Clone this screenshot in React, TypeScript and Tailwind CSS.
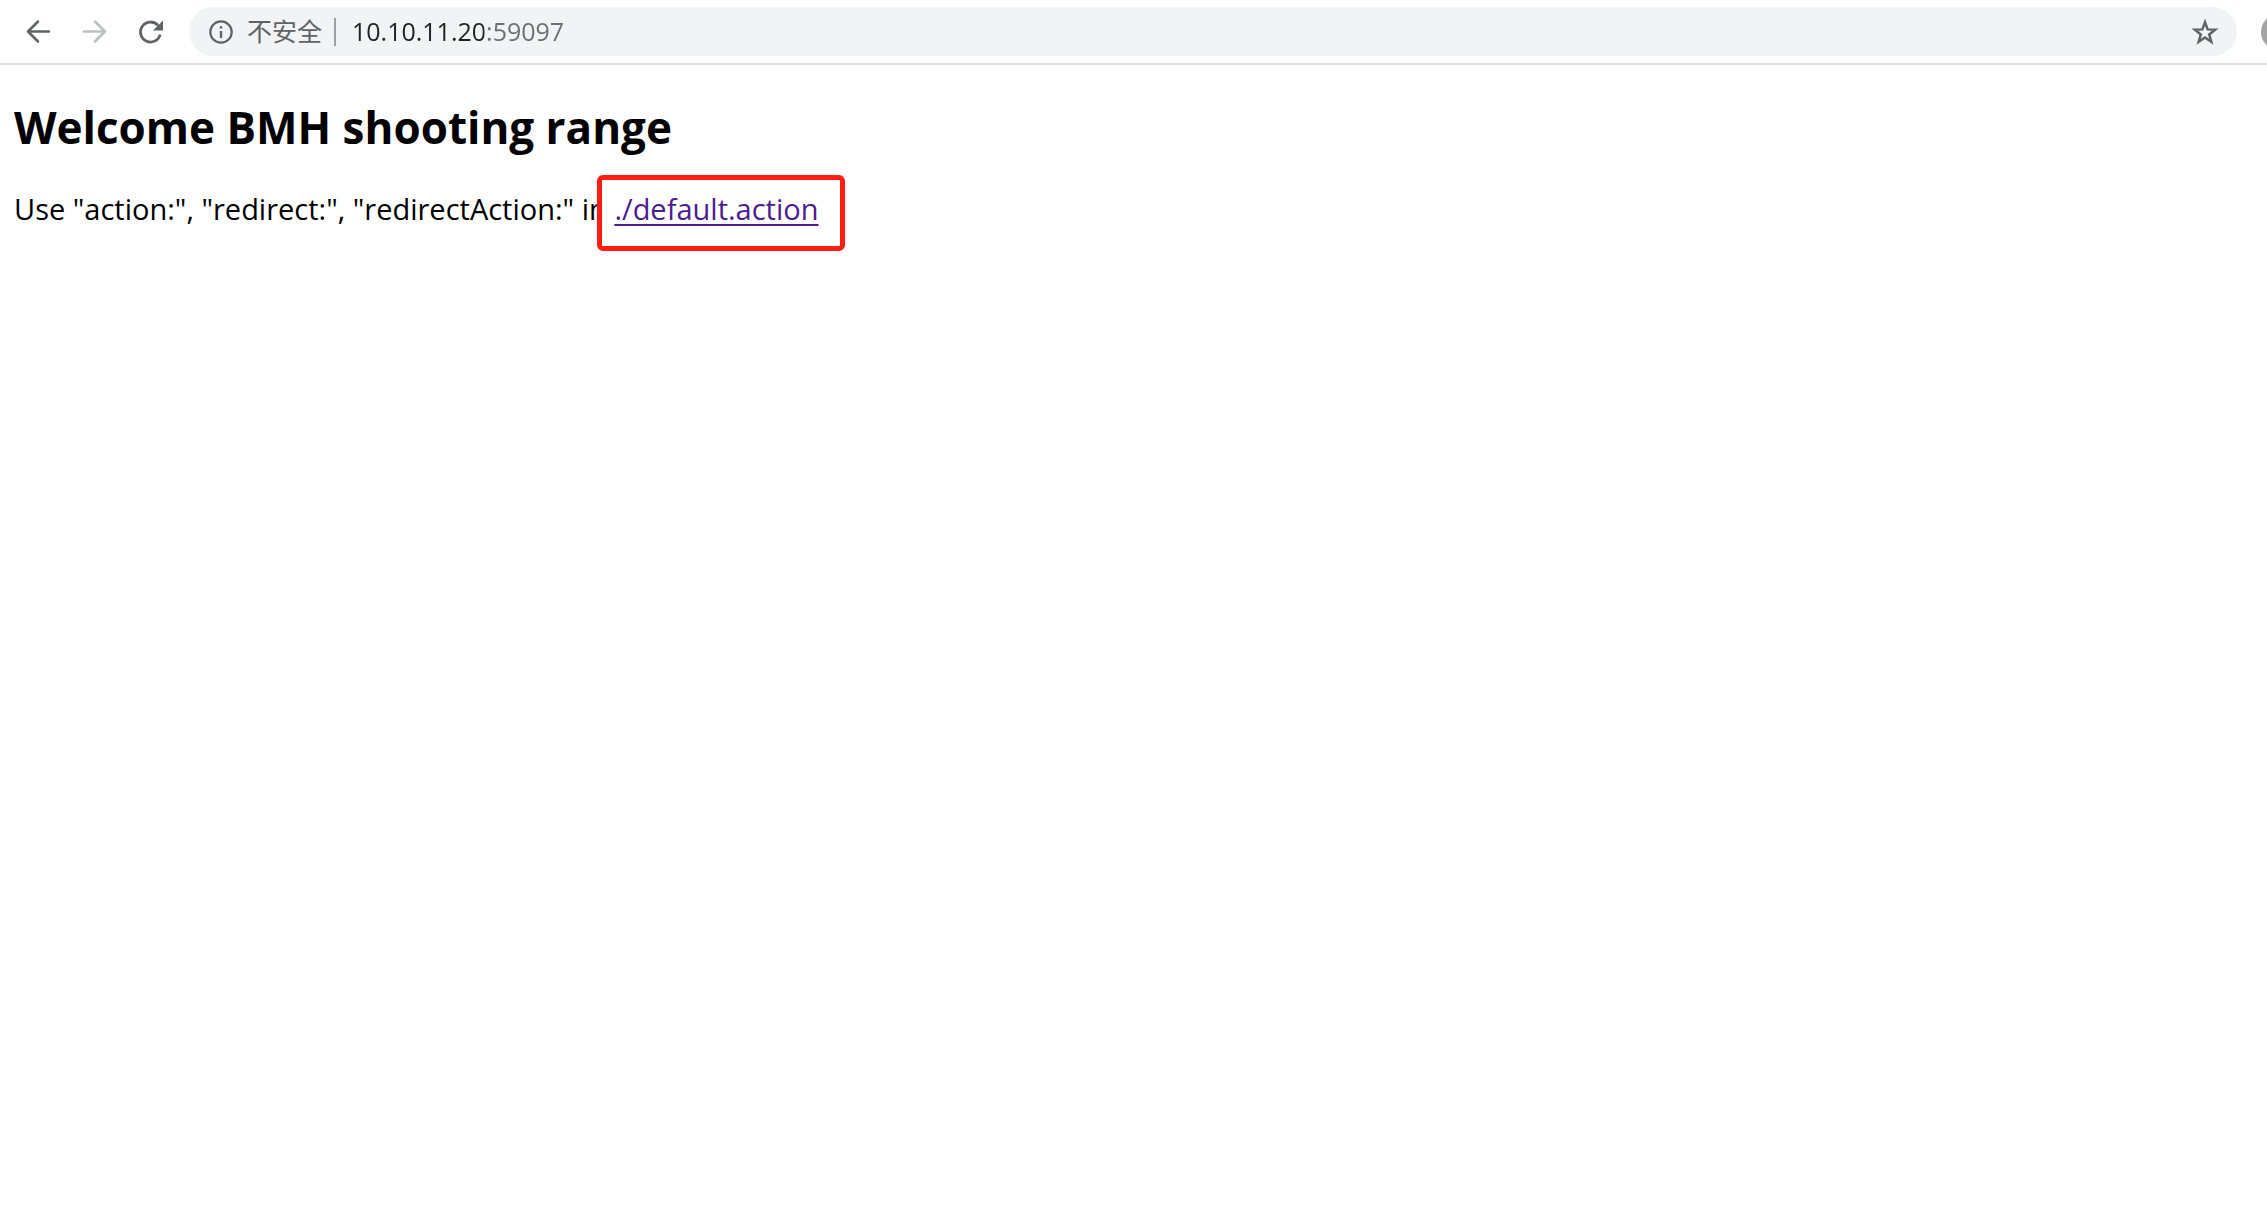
import { useState, type ReactNode } from "react";

function NavButton({ label, children, disabled }: { label: string; children: ReactNode; disabled?: boolean }) {
  return (
    <button
      type="button"
      aria-label={label}
      disabled={disabled}
      className="grid size-9 place-items-center text-[#5f6368] disabled:text-[#bdbfc1]"
    >
      {children}
    </button>
  );
}

function Arrow({ flipped }: { flipped?: boolean }) {
  return (
    <svg viewBox="0 0 36 36" className="size-9" fill="none" stroke="currentColor" strokeWidth="2.5" strokeLinecap="round" strokeLinejoin="round">
      {flipped ? <path d="M8 17.5h21M19 7.5l10 10-10 10" /> : <path d="M29 17.5H8M18 7.5l-10 10 10 10" />}
    </svg>
  );
}

function Toolbar() {
  const [address, setAddress] = useState("10.10.11.20:59097");
  return (
    <header className="flex items-center overflow-hidden border-b-2 border-[#dadce0] pt-[7px] pb-[7px] pl-5">
      <nav aria-label="Navigation" className="flex shrink-0 gap-5">
        <NavButton label="Back">
          <Arrow />
        </NavButton>
        <NavButton label="Forward" disabled>
          <Arrow flipped />
        </NavButton>
        <NavButton label="Reload">
          <svg viewBox="0 0 36 36" className="size-9" fill="none">
            <path d="M28.2 20.5A10 10 0 1 1 26 11.4" stroke="currentColor" strokeWidth="2.8" />
            <path d="M31 6.5v10H21z" fill="currentColor" />
          </svg>
        </NavButton>
      </nav>
      <div className="ml-[21px] flex h-[49px] min-w-0 flex-1 items-center rounded-full bg-[#f1f3f4] pr-4 pl-5 text-[25px] leading-[36px]">
        <button type="button" className="flex shrink-0 items-center gap-[14px] text-[#5f6368]">
          <svg viewBox="0 0 24 24" className="size-6" fill="none" stroke="currentColor" strokeWidth="2.2">
            <circle cx="12" cy="12" r="10.7" />
            <path d="M12 11v7M12 6.2v2.3" strokeWidth="2.4" />
          </svg>
          <span className="pb-[2px]">不安全</span>
        </button>
        <span className="ml-3 h-7 w-[2px] shrink-0 bg-[#9aa0a6]" />
        <input
          type="text"
          aria-label="Address"
          value={address}
          onChange={(event) => setAddress(event.target.value)}
          className="ml-4 h-9 min-w-0 flex-1 bg-[linear-gradient(to_right,#202124_132px,#6b6f73_132px)] bg-clip-text pb-[2px] text-transparent caret-black outline-none"
        />
        <button type="button" aria-label="Bookmark this page" className="grid size-8 shrink-0 place-items-center text-[#5f6368]">
          <svg viewBox="0 0 32 32" className="size-8" fill="none" stroke="currentColor" strokeWidth="2.5">
            <path d="M16 6.2l2.6 7.2 7.6.3-6 4.7 2.1 7.3L16 21.5l-6.3 4.2 2.1-7.3-6-4.7 7.6-.3z" />
          </svg>
        </button>
      </div>
      <button type="button" aria-label="Profile" className="-mr-[30px] ml-6 size-9 shrink-0 rounded-full bg-[#a3a3a3]" />
    </header>
  );
}

export default function App() {
  return (
    <div className="min-h-screen bg-white font-['Open_Sans','Noto_Sans_CJK_SC',sans-serif] text-black">
      <Toolbar />
      <main className="px-[14px] pt-[34px]">
        <h2 className="text-[44px] leading-[56px] font-bold">Welcome BMH shooting range</h2>
        <p className="mt-[34px] text-[29px] leading-10">
          Use "action:", "redirect:", "redirectAction:" in{" "}
          <span className="relative inline-block">
            <span className="pointer-events-none absolute -top-[14px] -right-[27px] -bottom-[22px] -left-[17px] rounded-[6px] border-5 border-[#ff1f12] bg-white" />
            <a href="./default.action" className="relative text-[#4b1d8f] underline decoration-2 underline-offset-4">
              ./default.action
            </a>
          </span>
        </p>
      </main>
    </div>
  );
}
